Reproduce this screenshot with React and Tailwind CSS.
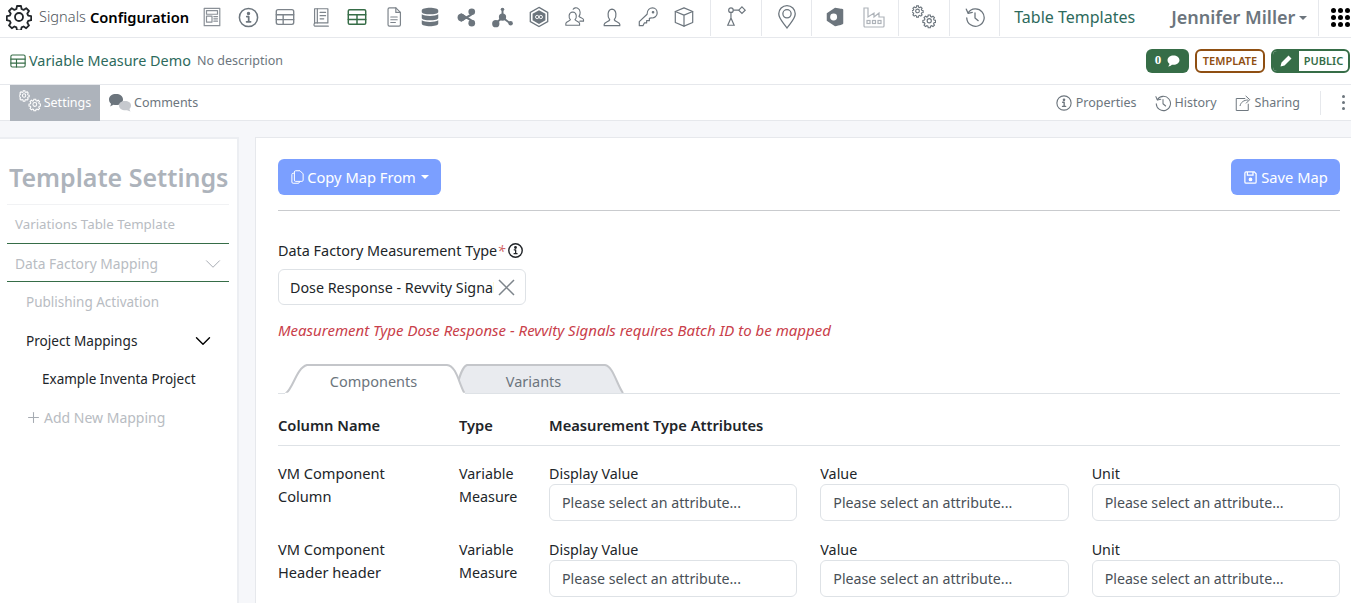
import React from "react";
import { ChevronDown, Plus } from "lucide-react";

const Svg = ({ size = 22, className = "", fill = "none", sw = 1.4, children }) => (
  <svg
    width={size}
    height={size}
    viewBox="0 0 24 24"
    fill={fill}
    stroke={fill === "none" ? "currentColor" : "none"}
    strokeWidth={sw}
    strokeLinecap="round"
    strokeLinejoin="round"
    className={className}
  >
    {children}
  </svg>
);

const gearPath =
  "M10 2h4l.6 3 2 .9 2.6-1.7 2.8 2.8-1.7 2.6.9 2 3 .6v4l-3 .6-.9 2 1.7 2.6-2.8 2.8-2.6-1.7-2 .9-.6 3h-4l-.6-3-2-.9-2.6 1.7-2.8-2.8 1.7-2.6-.9-2-3-.6v-4l3-.6.9-2-1.7-2.6 2.8-2.8 2.6 1.7 2-.9z";

const Gear = ({ size = 24, className = "", sw = 1.8 }) => (
  <svg width={size} height={size} viewBox="-1 0 26 26" fill="none" stroke="currentColor" strokeWidth={sw} strokeLinejoin="round" className={className}>
    <path d={gearPath} />
    <circle cx="12" cy="13" r="4" />
  </svg>
);

const Gears = ({ className = "", size = 24 }) => (
  <svg width={size} height={size} viewBox="0 0 24 24" fill="none" stroke="currentColor" strokeWidth="1.2" className={className}>
    <g transform="translate(0 0) scale(.46)">
      <path d={gearPath} strokeWidth="2.400" />
      <circle cx="12" cy="13" r="4" strokeWidth="2.400" />
    </g>
    <g transform="translate(11 9) scale(.52)">
      <path d={gearPath} strokeWidth="2.200" />
      <circle cx="12" cy="13" r="4" strokeWidth="2.200" />
    </g>
  </svg>
);

const TableIcon = ({ size = 22, className = "" }) => (
  <Svg size={size} className={className} sw={1.5}>
    <rect x="2.5" y="4" width="19" height="16" rx="2" />
    <path d="M2.500 9.500h19M2.500 14.800h19M10 9.500V20" />
  </Svg>
);

const GreenTable = ({ size = 22, className = "" }) => (
  <Svg size={size} className={className} sw={1.6}>
    <rect x="2.500" y="4" width="19" height="16" rx="1.500" />
    <path d="M2.500 9.500h19M2.500 14.800h19M12 9.500V20" />
  </Svg>
);

const InfoCircle = ({ size = 22, className = "", sw = 1.6 }) => (
  <Svg size={size} className={className} sw={sw}>
    <circle cx="12" cy="12" r="9.500" />
    <circle cx="12" cy="7.800" r="1" fill="currentColor" />
    <path d="M10.200 11h2v5.500M10 16.500h4.200" strokeWidth="1.800" />
  </Svg>
);

const HistoryIcon = ({ size = 22, className = "" }) => (
  <Svg size={size} className={className} sw={1.4}>
    <path d="M4.500 7.500A9.500 9.500 0 1 1 3 13" />
    <path d="M2.500 3.500l2 4.500 4.500-1" />
    <path d="M12 7.500V13l3.500 3" />
  </Svg>
);

const navIcons = [
  <Svg key="layout" className="text-[#8a9097]" sw={1.3}>
    <rect x="3.500" y="2.500" width="17" height="19" />
    <rect x="6" y="5" width="12" height="4" />
    <rect x="6" y="11" width="6" height="6.500" />
    <path d="M14 11.500h4M14 14h4M14 16.500h4" />
  </Svg>,
  <InfoCircle key="info" className="text-[#6c757d]" size={23} />,
  <TableIcon key="table" className="text-[#7d848b]" />,
  <Svg key="book" className="text-[#7d848b]" sw={1.3}>
    <path d="M5 18.500V3h14.500v15.500H6.500A2 2 0 0 0 5 22h15" />
    <path d="M8 3v15.500M11 7h6M11 10.500h6M11 14h4" />
  </Svg>,
  <GreenTable key="green" className="text-[#366d47]" />,
  <Svg key="file" className="text-[#7d848b]" sw={1.3}>
    <path d="M5.500 3.500a1.500 1.500 0 0 1 1.500-1.500h7l5 5v13.500a1.500 1.500 0 0 1-1.500 1.500H7a1.500 1.500 0 0 1-1.500-1.500z" />
    <path d="M14 2v5h5M8.500 12h7M8.500 15h7M8.500 18h5" />
  </Svg>,
  <Svg key="db" fill="#6c757d">
    <path d="M3 5c0-4 18-4 18 0v1.500c0 3.500-18 3.500-18 0zM3 9c3.500 2.500 14.500 2.500 18 0v4c0 3.500-18 3.500-18 0zM3 15.500c3.500 2.500 14.500 2.500 18 0V19c0 4-18 4-18 0z" />
  </Svg>,
  <Svg key="share" fill="#6c757d" size={21}>
    <path d="M6 15.500l11-6.500M6 8.500l11 6.500" stroke="#6c757d" strokeWidth="2.500" />
    <circle cx="18" cy="5.500" r="3.800" />
    <circle cx="18" cy="18.500" r="3.800" />
    <circle cx="6" cy="12" r="4.200" />
  </Svg>,
  <Svg key="molecule" fill="#6c757d" size={23}>
    <path d="M12 3v9M12 12L5 18M12 12l8 6" stroke="#6c757d" strokeWidth="2" />
    <circle cx="12" cy="3.500" r="1.800" />
    <circle cx="12" cy="11.500" r="3.800" />
    <circle cx="5" cy="18.500" r="3.800" />
    <circle cx="20.500" cy="18" r="2.300" />
  </Svg>,
  <svg key="hex" width="22" height="22" viewBox="0 0 24 24">
    <path d="M12 1.500l9.500 5.500v10l-9.500 5.500L2.500 17V7z" fill="none" stroke="#6c757d" strokeWidth="1.400" />
    <path d="M12 4.500l7 4v7l-7 4-7-4v-7z" fill="#6c757d" />
    <circle cx="10" cy="12" r="1.800" fill="none" stroke="#fff" strokeWidth="1" />
    <circle cx="14" cy="12" r="1.800" fill="none" stroke="#fff" strokeWidth="1" />
  </svg>,
  <Svg key="users" className="text-[#6c757d]" sw={1.200}>
    <path d="M2 21v-2c0-2 4-2.500 5-4-2-2-2.500-8 2.500-8.500 5 .5 4.500 6.500 2.500 8.500 1 1.500 5 2 5 4v2z" fill="#fff" />
    <path d="M10 3.500C11 2 13.500 1.500 15 2.500c3.500 1.500 3 7 1.300 8.800 1 1.500 5 1.700 5 3.700v1.500h-4" />
  </Svg>,
  <Svg key="user" className="text-[#6c757d]" sw={1.300}>
    <path d="M3.500 21.500v-1.500c0-2.500 5.500-3 6-5-2.500-2.500-3-11 2.500-11.500 5.500.5 5 9 2.500 11.500.5 2 6 2.500 6 5v1.500z" />
  </Svg>,
  <Svg key="key" className="text-[#6c757d]" sw={1.300}>
    <path d="M2.500 21.500V17l8.500-8C11 4 14 2 17 2c3 0 5 2.500 5 5.500 0 3.500-3 6-6.500 5.500l-2 .5v2.500h-3v2.500H8l-1.500 3z" />
    <circle cx="17.500" cy="6.800" r=".8" fill="currentColor" />
  </Svg>,
  <Svg key="cube" className="text-[#6c757d]" sw={1.300}>
    <path d="M12 2l9.500 4v12L12 22l-9.500-4V6z" />
    <path d="M2.500 6L12 10l9.500-4M12 10v12" />
  </Svg>,
];

const Sep = ({ className = "" }) => <div className={`w-px h-9 self-start bg-[#e6e8ec] shrink-0 ${className}`} />;

const AttrSelect = ({ label }) => (
  <div>
    <div className="text-[14.300px] leading-[21px] text-[#212529]">{label}</div>
    <div className="h-[37px] rounded-md border border-[#dee2e6] bg-white pl-3 pt-[1px] flex items-center text-[14.200px] text-[#495057]">
      Please select an attribute...
    </div>
  </div>
);

const MapRow = ({ name, sub, className = "" }) => (
  <div className={`grid grid-cols-[181px_90px_1fr] ${className}`}>
    <div className="-mt-[1px] text-[14.600px] leading-[23px] text-[#212529]">
      {name}
      <br />
      {sub}
    </div>
    <div className="-mt-[1px] text-[14.300px] leading-[23px] text-[#212529]">
      Variable
      <br />
      Measure
    </div>
    <div className="grid grid-cols-3 gap-x-[23px]">
      <AttrSelect label="Display Value" />
      <AttrSelect label="Value" />
      <AttrSelect label="Unit" />
    </div>
  </div>
);

const App = () => {
  return (
    <div className="w-[1351px] h-[603px] overflow-hidden bg-[#f6f7fa] font-['Noto_Sans',sans-serif] flex flex-col">
      {/* top nav */}
      <header className="h-[38px] bg-white border-b border-[#e6e8ec] flex items-center pb-[3px] shrink-0">
        <Gear size={26} className="ml-[6px] text-[#212529]" />
        <span className="ml-[7px] text-[14.600px] font-light text-[#4f565d]">Signals</span>
        <span className="ml-[4px] text-[14.700px] font-semibold text-black">Configuration</span>
        <div className="ml-[5px] flex items-center">
          {navIcons.map((icon) => (
            <div key={icon.key} className="w-[36.300px] flex justify-center">
              {icon}
            </div>
          ))}
        </div>
        <Sep className="ml-2" />
        <div className="w-[50px] flex justify-center text-[#6c757d]">
          <svg width="22" height="24" viewBox="0 0 24 24" fill="none" stroke="currentColor" strokeWidth="1.300">
            <circle cx="6.500" cy="4.500" r="2.500" />
            <path d="M9 4.500h6M6.500 7v6M6.500 13l-3.500 8h7zM3 21h7" />
            <path d="M18.500 1l3.500 3.500L18.500 8 15 4.500z" />
          </svg>
        </div>
        <Sep />
        <div className="w-[49px] flex justify-center text-[#6c757d]">
          <svg width="22" height="26" viewBox="0 0 24 28" fill="none" stroke="currentColor" strokeWidth="1.400">
            <path d="M12 26C8 20 3 16 3 10.500a9 9 0 0 1 18 0C21 16 16 20 12 26z" />
            <circle cx="12" cy="10.500" r="4.500" />
          </svg>
        </div>
        <Sep />
        <div className="w-[86px] flex items-center justify-around px-1">
          <svg width="22" height="24" viewBox="0 0 24 24">
            <path d="M3 8l9-6c5 1 9 1 9 2v15c0 1-4 2-9 3l-9-6z" fill="#6c757d" />
            <circle cx="10.500" cy="12" r="3.800" fill="#fff" />
          </svg>
          <svg width="24" height="24" viewBox="0 0 24 24" fill="none" stroke="#aeb3b9" strokeWidth="1.200">
            <path d="M2 21V3h4v9l6-4v4l5-4v4h5v9a1 1 0 0 1-1 1H3a1 1 0 0 1-1-1z" />
            <rect x="5" y="15.500" width="3" height="3" />
            <rect x="10.500" y="15.500" width="3" height="3" />
            <rect x="16" y="15.500" width="3" height="3" />
          </svg>
        </div>
        <Sep />
        <div className="w-[50px] flex justify-center">
          <Gears className="text-[#6c757d]" />
        </div>
        <Sep />
        <div className="w-[49px] flex justify-center">
          <HistoryIcon className="text-[#6c757d]" />
        </div>
        <Sep />
        <span className="ml-[14px] text-[16px] text-[#2d6a5c] whitespace-nowrap">Table Templates</span>
        <span className="ml-[36px] text-[18px] font-semibold text-[#6c757d] whitespace-nowrap">Jennifer Miller</span>
        <span className="ml-[4px] mt-[2px] w-0 h-0 border-x-[4px] border-x-transparent border-t-[4px] border-t-[#6c757d]" />
        <Sep className="ml-[11px]" />
        <div className="ml-[12px] grid grid-cols-3 gap-[2px]">
          {Array.from({ length: 9 }).map((_, i) => (
            <span key={i} className="w-[5px] h-[5px] rounded-full bg-black" />
          ))}
        </div>
      </header>

      {/* title bar */}
      <div className="h-[47px] bg-white border-b border-[#e6e8ec] flex items-center pl-[9px] shrink-0">
        <TableIcon size={18} className="text-[#366d47]" />
        <span className="ml-[2px] text-[14.400px] text-[#2d6a5c]">Variable Measure Demo</span>
        <span className="ml-[6px] text-[12.500px] text-[#6c757d]">No description</span>
        <div className="ml-auto mr-[1px] flex items-center gap-[6px]">
          <div className="h-6 w-[43px] rounded-md bg-[#366d47] text-white flex items-center justify-center gap-[6px] text-[11px] font-bold">
            <span className="font-['Liberation_Serif',serif] text-[13px] -mt-[3px]">0</span>
            <svg width="13" height="12" viewBox="0 0 24 22" fill="#fff">
              <path d="M12 1c6 0 11 3.800 11 8.500S18 18 12 18c-1 0-2-.1-3-.3C7 19.500 5 20.500 2 21c1.500-1.500 2.500-3 2.500-5C2.300 14.500 1 12 1 9.500 1 4.800 6 1 12 1z" />
            </svg>
          </div>
          <div className="h-6 w-[70px] rounded-md border-2 border-[#8f4f12] bg-white text-[#8f4f12] flex items-center justify-center text-[11px] font-semibold">
            TEMPLATE
          </div>
          <div className="h-6 w-[79px] rounded-md border-2 border-[#366d47] bg-white flex items-center overflow-hidden">
            <div className="w-[26px] h-full bg-[#366d47] flex items-center justify-center shrink-0">
              <svg width="12" height="12" viewBox="0 0 24 24" fill="#fff">
                <path d="M17 1l6 6-14 14-8 2 2-8zM4.500 17l2.500 2.500" />
              </svg>
            </div>
            <span className="flex-1 text-center text-[11px] font-semibold text-[#366d47]">PUBLIC</span>
          </div>
        </div>
      </div>

      {/* tabs bar */}
      <div className="h-[36px] bg-white border-b border-[#e6e8ec] flex items-center pl-[10px] shrink-0">
        <div className="h-[36px] w-[90px] bg-[#adb3bb] flex items-center justify-center gap-[3px] text-white text-[12.500px]">
          <Gears size={22} className="-mt-[3px]" />
          <span className="pt-[2px]">Settings</span>
        </div>
        <div className="ml-[8px] flex items-center gap-[2px] text-[12.500px] text-[#6c757d]">
          <svg width="24" height="22" viewBox="0 0 24 22">
            <path d="M8 2c4 0 7 2 7 5.500S12 13 8 13c-1 0-1.500 0-2.500-.2L2 14.500c.5-1 1-1.800 1-2.800C1.500 10.500 1 9 1 7.500 1 4 4 2 8 2z" fill="#6c757d" />
            <path d="M17 9c3.500 0 6 1.700 6 4.500 0 1.300-.5 2.500-1.500 3.300 0 1 .5 2 1 2.700l-3.500-1.300c-4.500.6-8-1.500-8-4.700C11 10.700 13.500 9 17 9z" fill="#c6c9ce" />
          </svg>
          <span className="pt-[2px]">Comments</span>
        </div>
        <div className="ml-auto flex items-center text-[12.500px] text-[#6c757d]">
          <InfoCircle size={18} sw={1.500} />
          <span className="ml-[3px] pt-[2px]">Properties</span>
          <HistoryIcon size={18} className="ml-[17px]" />
          <span className="ml-[3px] pt-[2px]">History</span>
          <svg width="18" height="18" viewBox="0 0 24 24" fill="none" stroke="currentColor" strokeWidth="1.300" className="ml-[17px]">
            <path d="M15 6H3v16h16v-9" />
            <path d="M8 16c1-5 5-8 11-8M15.500 2.500L21 7.500l-5 5" />
          </svg>
          <span className="ml-[3px] pt-[2px]">Sharing</span>
          <div className="ml-[20px] w-px h-6 bg-[#e6e8ec]" />
          <div className="ml-[21px] mr-[6px] flex flex-col gap-[3px]">
            <span className="w-[3px] h-[3px] rounded-full bg-[#6c757d]" />
            <span className="w-[3px] h-[3px] rounded-full bg-[#6c757d]" />
            <span className="w-[3px] h-[3px] rounded-full bg-[#6c757d]" />
          </div>
        </div>
      </div>

      {/* body */}
      <div className="flex-1 flex pt-4 gap-4 min-h-0">
        {/* sidebar */}
        <aside className="w-[239px] shrink-0 bg-white border-t-2 border-r-2 border-[#eceef2] pl-[7px] pr-[8px] text-[13.500px]">
          <h1 className="pl-[2px] pt-[18px] pb-[7px] text-[25px] leading-[40px] font-semibold text-[#adb3bb] border-b border-[#f1f2f4] whitespace-nowrap">
            Template Settings
          </h1>
          <div className="h-[39px] pl-[8px] pt-[2px] flex items-center border-b border-[#366d47] text-[13.300px] text-[#b8bcc2]">Variations Table Template</div>
          <div className="h-[38px] pl-[8px] pr-[3px] pt-[3px] flex items-center justify-between border-b border-[#366d47] text-[13.800px] text-[#b8bcc2]">
            Data Factory Mapping
            <ChevronDown size={26} strokeWidth={0.900} className="text-[#a6abb2] -my-1" />
          </div>
          <div className="h-[40px] pl-[19px] flex items-center text-[#b8bcc2]">Publishing Activation</div>
          <div className="h-[38px] pl-[19px] pr-[13px] flex items-center justify-between text-[13.600px] text-[#212529]">
            Project Mappings
            <ChevronDown size={26} strokeWidth={1.300} className="text-black -my-1" />
          </div>
          <div className="h-[38px] pl-[35px] flex items-center text-[#212529]">Example Inventa Project</div>
          <div className="h-[39px] pl-[18px] flex items-center gap-[2px] text-[14px] text-[#b8bcc2]">
            <Plus size={17} strokeWidth={1.500} className="text-[#a6abb2]" />
            Add New Mapping
          </div>
        </aside>

        {/* main panel */}
        <main className="flex-1 bg-white border-t border-l border-[#e6e8ec] pl-[22px] pr-[11px] min-w-0">
          <div className="flex items-center justify-between pt-[21px] pb-[15px] border-b border-[#c9cbce]">
            <button className="h-9 w-[163px] rounded-md bg-[#7b9fff] text-white text-[14.700px] flex items-center justify-center gap-[2px]">
              <svg width="15" height="16" viewBox="0 0 24 24" fill="none" stroke="currentColor" strokeWidth="1.600">
                <path d="M9 2h7l5 5v10a2 2 0 0 1-2 2H9a2 2 0 0 1-2-2V4a2 2 0 0 1 2-2z" />
                <path d="M7 6H5a2 2 0 0 0-2 2v12a2 2 0 0 0 2 2h8a2 2 0 0 0 2-2v-1" />
              </svg>
              <span className="pt-[1px]">Copy Map From</span>
              <span className="ml-[3px] w-0 h-0 border-x-[4px] border-x-transparent border-t-[4px] border-t-white" />
            </button>
            <button className="h-9 w-[109px] rounded-md bg-[#7b9fff] text-white text-[14.700px] flex items-center justify-center gap-[3px]">
              <svg width="15" height="15" viewBox="0 0 24 24" fill="none" stroke="currentColor" strokeWidth="2">
                <path d="M3 5a2 2 0 0 1 2-2h13l3 3v13a2 2 0 0 1-2 2H5a2 2 0 0 1-2-2z" />
                <path d="M7 3v5h9V3" />
                <circle cx="12" cy="15" r="2" fill="currentColor" />
              </svg>
              <span className="pt-[1px]">Save Map</span>
            </button>
          </div>

          <div className="mt-[29px] flex items-center text-[14.400px] leading-[21px] text-[#212529]">
            Data Factory Measurement Type<span className="text-[#d0635f] italic">*</span>
            <InfoCircle size={17} sw={2} className="ml-[2px] text-[#212529]" />
          </div>
          <div className="mt-[8px] w-[248px] h-9 rounded-md border border-[#dee2e6] flex items-center pl-[11px] pr-[10px] text-[14.300px] text-[#212529]">
            <span className="flex-1 overflow-hidden whitespace-nowrap pt-[1px]">Dose Response - Revvity Signals</span>
            <svg width="17" height="17" viewBox="0 0 17 17" fill="none" stroke="#7d848b" strokeWidth="1.500" className="shrink-0 ml-[4px]">
              <path d="M1 1l15 15M16 1L1 16" />
            </svg>
          </div>
          <p className="mt-[15px] text-[15px] leading-[20px] italic text-[#c9404a]">
            Measurement Type Dose Response - Revvity Signals requires Batch ID to be mapped
          </p>

          {/* tab strip */}
          <div className="mt-[23px] h-[31px] relative border-b border-[#dee2e6] text-[14.500px] flex">
            <div className="absolute left-[175px] top-0 w-[172px] h-[30px] flex items-center justify-center text-[#6c757d] pt-[8px]">
              <svg width="172" height="30" viewBox="0 0 172 30" className="absolute inset-0">
                <path d="M2 30C5 20 8 4 14 2h138c8 1 12 20 18 28" fill="#e9ebef" stroke="#c4c6ca" strokeWidth="2" />
              </svg>
              <span className="relative -ml-[11px]">Variants</span>
            </div>
            <div className="absolute left-[7px] top-0 w-[180px] h-[31px] flex items-center justify-center text-[#6c757d] pt-[6px]">
              <svg width="180" height="31" viewBox="0 0 180 31" className="absolute inset-0">
                <path d="M0 31C8 27 11 5 22 2h140c10 1 12 20 18 29" fill="#fff" stroke="#c4c6ca" strokeWidth="2" />
                <path d="M0 30.500h180" stroke="#fff" strokeWidth="1.500" />
              </svg>
              <span className="relative -ml-[3px]">Components</span>
            </div>
          </div>

          {/* mapping table */}
          <div className="grid grid-cols-[181px_90px_1fr] h-[52px] items-center border-b border-[#dee2e6] text-[14.700px] font-semibold text-[#212529] pt-[12px]">
            <span>Column Name</span>
            <span>Type</span>
            <span>Measurement Type Attributes</span>
          </div>
          <MapRow name="VM Component" sub="Column" className="pt-[17px]" />
          <MapRow name="VM Component" sub="Header header" className="pt-[18px]" />
        </main>
      </div>
    </div>
  );
};

export default App;
